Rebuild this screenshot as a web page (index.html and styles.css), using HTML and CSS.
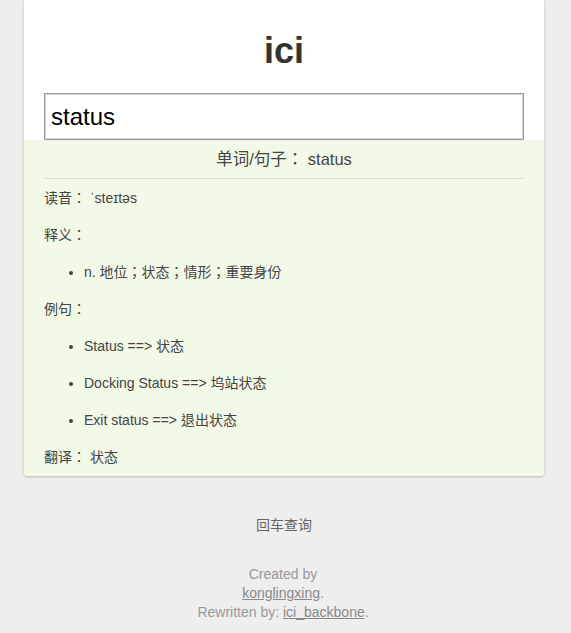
FILE: index.html
```html
<!DOCTYPE html>
<html lang="zh-Hant">
<head>
<meta charset="utf-8">
<title>ici</title>
<link rel="stylesheet" href="styles.css">
</head>
<body>
<div class="page">
  <div class="card">
    <div class="top">
      <h1 class="title">ici</h1>
      <input class="query" type="text" value="status">
    </div>
    <div class="result">
      <h2 class="word">单词/句子：&nbsp;status</h2>
      <hr class="rule">
      <div class="rows">
        <p class="row">读音：&nbsp;ˈsteɪtəs</p>
        <p class="row">释义：</p>
        <ul class="list">
          <li>n. 地位；状态；情形；重要身份</li>
        </ul>
        <p class="row">例句：</p>
        <ul class="list">
          <li>Status ==&gt; 状态</li>
          <li>Docking Status ==&gt; 坞站状态</li>
          <li>Exit status ==&gt; 退出状态</li>
        </ul>
        <p class="row">翻译：&nbsp;状态</p>
      </div>
    </div>
  </div>
  <p class="hint">回车查询</p>
  <footer class="foot">
    Created by<br>
    <a href="#">konglingxing</a>.<br>
    Rewritten by: <a href="#">ici_backbone</a>.
  </footer>
</div>
</body>
</html>
```
FILE: styles.css
```css
html, body {
  margin: 0;
  padding: 0;
  background: #eeeeee;
  font-family: "Liberation Sans", Arial, "Noto Sans CJK TC", sans-serif;
  color: #444;
}
.page {
  padding: 0 27px 0 24px;
}
.card {
  width: 520px;
  background: #fff;
  border-radius: 0 0 4px 4px;
  box-shadow: 0 1px 3px rgba(0, 0, 0, 0.22);
  overflow: hidden;
}
.top {
  padding: 31px 20px 0;
}
.title {
  margin: 0;
  font-size: 36px;
  line-height: 40px;
  font-weight: bold;
  text-align: center;
  color: #333;
}
.query {
  display: block;
  box-sizing: border-box;
  margin: 22px 0 0;
  width: 480px;
  height: 47px;
  border: 1px solid #999;
  box-shadow: inset 0 0 0 1px #d6d6d6;
  padding: 0 6px;
  font-family: "Liberation Sans", Arial, sans-serif;
  font-size: 24px;
  color: #000;
  background: #fff;
  outline: none;
}
.result {
  background: #f2f9e6;
  border-top: 1px solid #eef2ea;
  padding: 8px 20px 9px;
}
.word {
  margin: 0;
  font-size: 16.5px;
  line-height: 20px;
  font-weight: normal;
  text-align: center;
  color: #444;
}
.rule {
  margin: 9px 0 0;
  border: 0;
  border-top: 1px solid #ddd;
  height: 0;
}
.rows {
  display: flex;
  flex-direction: column;
  gap: 17px;
  margin-top: 9px;
  font-size: 14px;
  line-height: 20px;
}
.row {
  margin: 0;
}
.list {
  margin: 0;
  padding-left: 40px;
  display: flex;
  flex-direction: column;
  gap: 17px;
}
.list li {
  list-style: disc;
}
.hint {
  margin: 39px 0 0;
  width: 520px;
  text-align: center;
  font-size: 14px;
  line-height: 20px;
  color: #666;
}
.foot {
  width: 518px;
  margin-top: 30px;
  text-align: center;
  font-size: 14px;
  line-height: 19px;
  color: #999;
}
.foot a {
  color: #888;
  text-decoration: underline;
}
```
